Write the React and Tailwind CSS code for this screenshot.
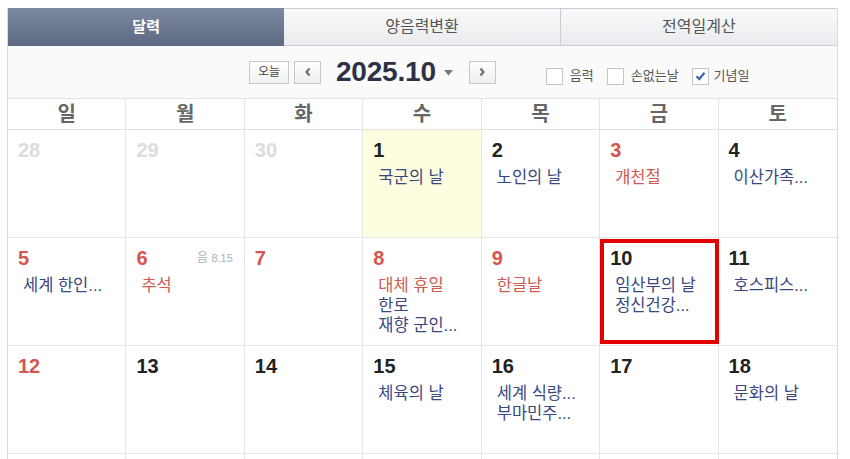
import React from 'react';

const DAYS = ['일', '월', '화', '수', '목', '금', '토'];

// d: date, t: tone (gray | red | black), ev: [text, isHoliday]
const WEEKS = [
  [
    { d: 28, t: 'gray' }, { d: 29, t: 'gray' }, { d: 30, t: 'gray' },
    { d: 1, today: true, ev: [['국군의 날']] },
    { d: 2, ev: [['노인의 날']] },
    { d: 3, t: 'red', ev: [['개천절', true]] },
    { d: 4, ev: [['이산가족...']] },
  ],
  [
    { d: 5, t: 'red', ev: [['세계 한인...']] },
    { d: 6, t: 'red', lunar: '8.15', ev: [['추석', true]] },
    { d: 7, t: 'red' },
    { d: 8, t: 'red', ev: [['대체 휴일', true], ['한로'], ['재향 군인...']] },
    { d: 9, t: 'red', ev: [['한글날', true]] },
    { d: 10, picked: true, ev: [['임산부의 날'], ['정신건강...']] },
    { d: 11, ev: [['호스피스...']] },
  ],
  [
    { d: 12, t: 'red' }, { d: 13 }, { d: 14 },
    { d: 15, ev: [['체육의 날']] },
    { d: 16, ev: [['세계 식량...'], ['부마민주...']] },
    { d: 17 },
    { d: 18, ev: [['문화의 날']] },
  ],
  // next week only peeks in at the bottom edge
  [{}, {}, {}, {}, {}, {}, {}],
];

const TONE = { gray: 'text-[#dcdcdc]', red: 'text-[#d4564f]', black: 'text-[#222]' };

export default function App() {
  return (
    <div className="min-h-screen bg-white pl-[7px] pt-[8px] font-['Liberation_Sans','Noto_Sans_CJK_KR',sans-serif]">
      <div className="w-[831px] border-x border-[#dcdcdc]">
        {/* Tabs */}
        <div className="grid grid-cols-3 h-[38px]">
          <div className="flex items-center justify-center bg-gradient-to-b from-[#7d89a0] to-[#5d6980] text-[15px] font-bold text-white">달력</div>
          <div className="flex items-center justify-center border-t border-b border-r border-[#c9ccd2] bg-gradient-to-b from-[#f8f9fa] to-[#e9ebee] text-[16px] text-[#555]">양음력변환</div>
          <div className="flex items-center justify-center border-t border-b border-[#c9ccd2] bg-gradient-to-b from-[#f8f9fa] to-[#e9ebee] text-[16px] text-[#555]">전역일계산</div>
        </div>

        {/* Month nav */}
        <div className="flex h-[53px] items-center bg-[#fafafa] border-b border-[#e2e2e2]">
          <div className="flex items-center pl-[241px]">
            <button className="flex h-[23px] w-[40px] items-center justify-center border border-[#c8c8c8] bg-gradient-to-b from-white to-[#f0f0f0] text-[12px] text-[#444]">오늘</button>
            <NavBtn className="ml-[5px]" dir="left" />
            <span className="ml-[15px] text-[28px] font-bold leading-none tracking-[-0.2px] text-[#2e3146]">2025.10</span>
            <svg className="ml-[8px] mt-[1px]" width="9" height="6" viewBox="0 0 9 6"><path d="M0 0h9L4.5 5.5z" fill="#7a7a7a" /></svg>
            <NavBtn className="ml-[16px]" dir="right" />
          </div>
          <div className="ml-[50px] mt-[8px] flex items-center text-[13px] text-[#555]">
            <Check />
            <span className="ml-[7px]">음력</span>
            <Check className="ml-[13px]" />
            <span className="ml-[7px]">손없는날</span>
            <Check className="ml-[13px]" checked />
            <span className="ml-[5px]">기념일</span>
          </div>
        </div>

        {/* Weekday header */}
        <div className="grid grid-cols-7 h-[31px] border-b border-[#e2e2e2]">
          {DAYS.map((d, i) => (
            <div key={d} className={`flex items-center justify-center text-[20px] font-bold text-[#666] ${i < 6 ? 'border-r border-[#e6e6e6]' : ''}`}>{d}</div>
          ))}
        </div>

        {/* Weeks */}
        {WEEKS.map((w, wi) => (
          <div key={wi} className="grid grid-cols-7 h-[108px] border-b border-[#e6e6e6]">
            {w.map((c, i) => <Cell key={i} c={c} last={i === 6} />)}
          </div>
        ))}
      </div>
    </div>
  );
}

function Cell({ c, last }) {
  return (
    <div className={`relative pl-[10px] pt-[10px] ${last ? '' : 'border-r border-[#e6e6e6]'} ${c.today ? 'bg-[#fdfddf]' : ''}`}>
      {c.d && (
        <div className="flex items-center justify-between pr-[11px]">
          <span className={`text-[20px] font-bold leading-[20px] ${TONE[c.t || 'black']}`}>{c.d}</span>
          {c.lunar && (
            <span className="text-[12px] leading-[20px] text-[#b0b0b0]">
              음 <span className="text-[11px]">{c.lunar}</span>
            </span>
          )}
        </div>
      )}
      {c.ev && (
        <div className="mt-[7px] pl-[5px]">
          {c.ev.map(([t, hol], i) => (
            <div key={i} className={`whitespace-nowrap text-[16.5px] leading-[20px] ${hol ? 'text-[#cf5a52]' : 'text-[#3a4880]'}`}>{t}</div>
          ))}
        </div>
      )}
      {c.picked && <div className="absolute left-0 right-[-1px] top-px bottom-px border-4 border-[#e40000]" />}
    </div>
  );
}

function NavBtn({ dir, className = '' }) {
  return (
    <button className={`flex h-[23px] w-[27px] items-center justify-center border border-[#c8c8c8] bg-gradient-to-b from-white to-[#eeeeee] ${className}`}>
      <svg width="8" height="10" viewBox="0 0 8 10">
        <path d={dir === 'left' ? 'M5.5 1.5L2.5 5l3 3.5' : 'M2.5 1.5L5.5 5l-3 3.5'} fill="none" stroke="#6f6f6f" strokeWidth="2.2" />
      </svg>
    </button>
  );
}

function Check({ checked, className = '' }) {
  return (
    <span className={`flex h-[17px] w-[17px] items-center justify-center border border-[#c4c4c4] bg-white ${className}`}>
      {checked && (
        <svg width="11" height="10" viewBox="0 0 11 10">
          <path d="M1.5 5.2l2.8 2.8L9.5 1.8" fill="none" stroke="#3b68b6" strokeWidth="2.2" />
        </svg>
      )}
    </span>
  );
}
